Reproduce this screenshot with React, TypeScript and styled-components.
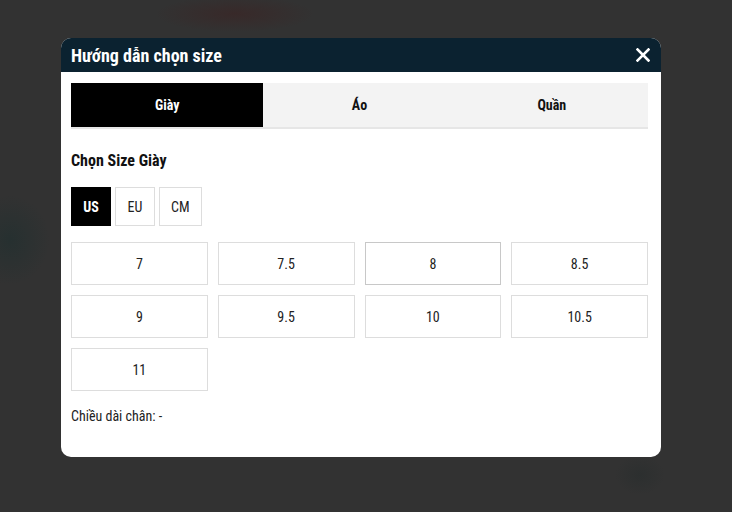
import React, { useState } from 'react';
import styled, { createGlobalStyle } from 'styled-components';

const GlobalStyle = createGlobalStyle`
  * { box-sizing: border-box; }
  html, body { margin: 0; padding: 0; }
  body {
    font-family: "Roboto Condensed", "Liberation Sans Narrow", "DejaVu Sans Condensed", Roboto, sans-serif;
    background: #323232;
  }
`

const Overlay = styled.div`
  width: 732px;
  height: 512px;
  overflow: hidden;
  padding: 38px 0 0 61px;
  background:
    radial-gradient(ellipse 80px 18px at 235px 14px, rgba(70, 20, 20, 0.3), transparent),
    radial-gradient(ellipse 40px 45px at 10px 240px, rgba(20, 45, 45, 0.4), transparent),
    radial-gradient(ellipse 25px 20px at 640px 475px, rgba(30, 40, 40, 0.3), transparent),
    #323232;
`

const Modal = styled.div`
  width: 600px;
  background: #fff;
  border-radius: 10px;
  overflow: hidden;
`

const Header = styled.div`
  height: 34px;
  background: #0b2230;
  display: flex;
  align-items: center;
  justify-content: space-between;
  padding: 0 9px 0 10px;
`

const Title = styled.h2`
  margin: 0;
  color: #fff;
  font-size: 18px;
  font-weight: 700;
`

const CloseButton = styled.button`
  width: 18px;
  height: 18px;
  padding: 0;
  border: none;
  background: none;
  display: flex;
  align-items: center;
  justify-content: center;
  cursor: pointer;
`

const Body = styled.div`
  padding: 11px 13px 32px 10px;
`

const Tabs = styled.div`
  display: grid;
  grid-template-columns: repeat(3, 1fr);
  background: #f3f3f3;
  border-bottom: 2px solid #e6e6e6;
`

const Tab = styled.button<{ $active?: boolean }>`
  height: 44px;
  border: none;
  font-family: inherit;
  font-size: 14px;
  font-weight: 700;
  background: ${p => (p.$active ? '#000' : 'transparent')};
  color: ${p => (p.$active ? '#fff' : '#111')};
  cursor: pointer;
`

const SectionTitle = styled.h3`
  margin: 21px 0 0;
  font-size: 16px;
  font-weight: 700;
  color: #111;
  line-height: 22px;
`

const UnitRow = styled.div`
  display: flex;
  gap: 4px;
  margin-top: 15px;
`

const UnitButton = styled.button<{ $active?: boolean }>`
  height: 39px;
  min-width: 40px;
  padding: 0 11px;
  font-family: inherit;
  font-size: 14px;
  border: 1px solid ${p => (p.$active ? '#000' : '#ddd')};
  background: ${p => (p.$active ? '#000' : '#fff')};
  color: ${p => (p.$active ? '#fff' : '#222')};
  font-weight: ${p => (p.$active ? 700 : 400)};
  cursor: pointer;
`

const SizeGrid = styled.div`
  display: grid;
  grid-template-columns: repeat(4, 1fr);
  gap: 10px;
  margin-top: 16px;
`

const SizeCell = styled.button<{ $hover?: boolean }>`
  height: 43px;
  border: 1px solid ${p => (p.$hover ? '#c8c8c8' : '#ddd')};
  background: #fff;
  font-family: inherit;
  font-size: 14px;
  color: #222;
  cursor: pointer;
`

const FootLength = styled.p`
  margin: 16px 0 0;
  font-size: 14px;
  color: #222;
  line-height: 18px;
`

const tabs = ['Giày', 'Áo', 'Quần']
const units = ['US', 'EU', 'CM']
const sizes = ['7', '7.5', '8', '8.5', '9', '9.5', '10', '10.5', '11']

export default function App() {
  const [tab, setTab] = useState('Giày')
  const [unit, setUnit] = useState('US')

  return (
    <>
      <GlobalStyle />
      <Overlay>
        <Modal>
          <Header>
            <Title>Hướng dẫn chọn size</Title>
            <CloseButton aria-label="Đóng">
              <svg width="14" height="14" viewBox="0 0 14 14">
                <path d="M1.5 1.5 L12.5 12.5 M12.5 1.5 L1.5 12.5" stroke="#fff" strokeWidth="2.6" strokeLinecap="square" />
              </svg>
            </CloseButton>
          </Header>
          <Body>
            <Tabs>
              {tabs.map(t => (
                <Tab key={t} $active={t === tab} onClick={() => setTab(t)}>{t}</Tab>
              ))}
            </Tabs>
            <SectionTitle>Chọn Size Giày</SectionTitle>
            <UnitRow>
              {units.map(u => (
                <UnitButton key={u} $active={u === unit} onClick={() => setUnit(u)}>{u}</UnitButton>
              ))}
            </UnitRow>
            <SizeGrid>
              {sizes.map(s => (
                <SizeCell key={s} $hover={s === '8'}>{s}</SizeCell>
              ))}
            </SizeGrid>
            <FootLength>Chiều dài chân: -</FootLength>
          </Body>
        </Modal>
      </Overlay>
    </>
  )
}
